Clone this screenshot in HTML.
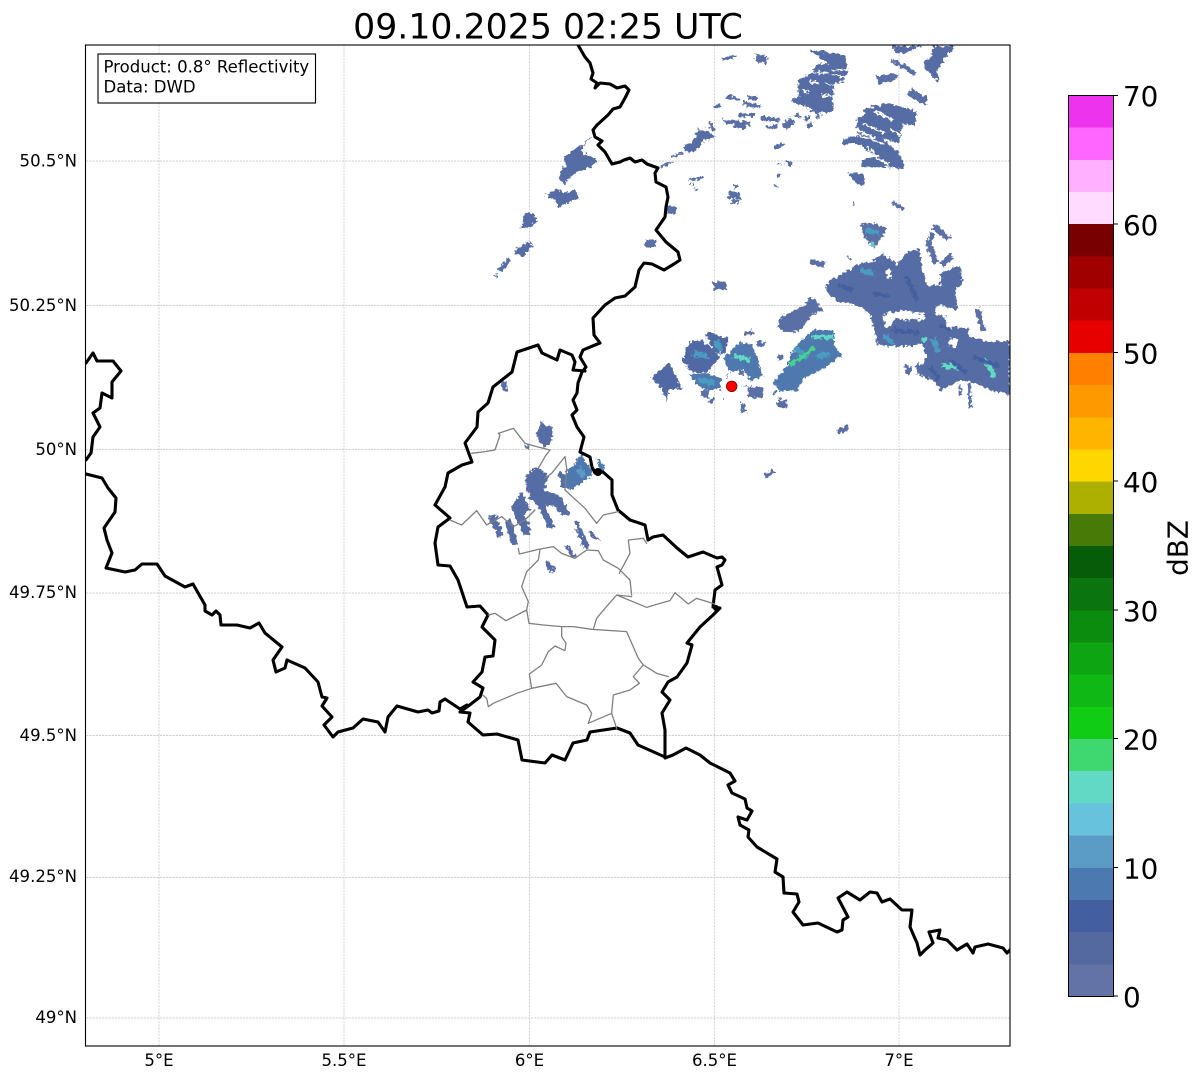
<!DOCTYPE html>
<html><head><meta charset="utf-8">
<style>
html,body{margin:0;padding:0;background:#fff;width:1202px;height:1081px;overflow:hidden}
svg{display:block}
text{font-family:"DejaVu Sans",sans-serif;fill:#000}
.g{stroke:#c2c2c2;stroke-width:.7;stroke-dasharray:2.2 1;fill:none}
.b{fill:none;stroke:#000;stroke-width:3.1;stroke-linejoin:round;stroke-linecap:round}
.c{fill:none;stroke:#808080;stroke-width:1.3;stroke-linejoin:round;stroke-linecap:round}
.r path{fill:none;stroke:#5a6fa6}
.r polygon{fill:#556ca5;stroke:none}
.r path.w{stroke:#fff}
.t{font-size:16.55px}
.k{font-size:27.8px}
</style></head><body>
<svg width="1202" height="1081" viewBox="0 0 1202 1081" xmlns="http://www.w3.org/2000/svg">
<defs>
<clipPath id="f"><rect x="85.5" y="45" width="924.5" height="1001"/></clipPath>
<filter id="j" filterUnits="userSpaceOnUse" x="85" y="45" width="925" height="1001" color-interpolation-filters="sRGB">
<feTurbulence type="fractalNoise" baseFrequency=".28" numOctaves="2" seed="4" result="n"/>
<feDisplacementMap in="SourceGraphic" in2="n" scale="7" xChannelSelector="R" yChannelSelector="G"/>
</filter>
</defs>
<rect width="1202" height="1081" fill="#fff"/>
<g class="g">
<path d="M159 45V1046M344 45V1046M529.5 45V1046M714.5 45V1046M899 45V1046"/>
<path d="M86 161H1010M86 305.5H1010M86 449.5H1010M86 593H1010M86 735.5H1010M86 877.5H1010M86 1018H1010"/>
</g>
<g clip-path="url(#f)"><g filter="url(#j)">
<g class="r" transform="translate(480,40) scale(.338,.3333)">
<polygon points="975,30 1080,45 1088,95 1075,125 1045,130 1045,212 1000,222 915,180 945,170 940,125 985,90 1020,60"/>
<path class="w" stroke-width="5" d="M990 65L1030 72M975 95L1030 100M1040 88L1095 92M1040 105L1090 112M950 150L975 155M1020 130L1060 135M930 195L975 205M975 125L1005 130M1010 165L1050 170"/>
<polygon points="1340,18 1405,18 1365,70 1350,95 1362,118 1355,125 1320,90 1310,65 1335,55"/>
<polygon points="1218,18 1310,18 1290,25 1250,42 1230,38"/>
<polygon points="1130,205 1215,190 1292,215 1290,262 1250,250 1240,310 1190,295 1250,350 1255,385 1125,380 1130,360 1175,350 1115,310 1070,315 1072,298 1115,290 1115,235 1140,225"/>
<path class="w" stroke-width="6" d="M1130 250L1200 280M1120 285L1190 310M1145 320L1170 345M1170 215L1220 240M1110 268L1170 295M1160 340L1220 385M1215 270L1260 292"/>
<polygon points="1090,400 1115,395 1140,410 1135,436 1110,430"/>
<polygon points="335,288 300,320 300,335 345,360 330,380 280,400 250,432 232,415 255,370 248,350"/>
<polygon points="195,465 225,445 250,460 285,445 290,475 235,502 220,480"/>
<polygon points="120,565 130,525 145,515 172,540 150,558"/>
<polygon points="100,635 150,600 155,620 125,652"/>
<polygon points="52,690 85,652 92,665 65,695"/>
<polygon points="648,268 668,268 695,292 660,300 655,322 618,340 598,322 630,305"/>
<path stroke-width="8" d="M715 58L760 48M565 350L600 340M535 380L565 365M905 365L922 375M617 420L660 412M715 198L690 202"/>
<path stroke-width="22" d="M815 55L848 60M1175 120L1232 110"/>
<path stroke-width="26" d="M1270 155L1320 185"/>
<path stroke-width="12" d="M1220 62L1288 100M1220 487L1255 510M730 170L770 178M790 172L820 175M780 190L830 200M720 245L800 250M750 258L785 260M680 245L690 270M935 222L945 232M995 228L1008 228M960 235L975 238M968 255L982 255M878 407L890 407M765 225L810 225M830 235L885 240M850 262L880 260M870 322L897 312"/>
<path stroke-width="24" d="M900 260L925 240"/>
<path stroke-width="24" d="M488 612L520 612M550 510L580 510M690 738L730 736M735 465L770 465"/>
<path stroke-width="12" d="M745 485L765 485M750 440L762 440"/>
<path stroke-width="6" d="M1105 490L1110 490M880 372L890 372M47 710L52 704M870 435L878 440M620 432L630 432M637 450L642 450"/>
</g>
<g class="r" transform="translate(640,210) scale(.3333)">
<polygon points="555,225 600,195 650,165 700,150 730,130 770,165 800,130 835,115 850,180 862,230 900,225 900,190 960,165 968,222 945,240 955,300 890,285 885,315 915,320 920,350 985,355 985,375 1010,385 1050,395 1110,390 1110,560 1090,548 1060,545 1010,520 960,510 905,540 880,515 830,490 860,440 845,405 770,410 715,405 705,365 690,310 650,285 600,275 565,255"/>
<polygon style="fill:#fff" points="728,318 748,306 800,302 855,312 855,330 800,331 765,326 748,350 738,352"/>
<polygon style="fill:#fff" points="924,390 948,384 956,400 944,412 926,406"/>
<polygon style="fill:#fff" points="738,182 750,180 754,202 742,205"/>
<polygon style="fill:#5a6fa6" points="660,45 700,40 740,55 730,75 700,118 670,75"/>
<polygon style="fill:#5a6fa6" points="412,350 425,318 490,288 515,258 552,305 515,314 482,362 440,370"/>
<polygon style="fill:#4f79ae" points="480,395 520,360 580,360 585,410 605,435 560,470 490,505 470,540 420,545 398,520 440,470 460,420"/>
<polygon style="fill:#5069a4" points="148,396 185,390 242,438 205,486 160,488 126,455"/>
<polygon style="fill:#4f79ae" points="145,495 195,488 244,505 238,533 205,543 170,525"/>
<polygon style="fill:#5069a4" points="34,505 85,458 102,490 128,538 85,538 80,575 62,532"/>
<polygon style="fill:#5069a4" points="195,372 212,368 266,385 256,432 226,428 208,398"/>
<polygon style="fill:#4f79ae" points="252,445 300,396 332,400 352,438 368,494 335,514 310,478 290,482 268,486"/>
<path stroke-width="16" d="M880 50L925 85M875 70L865 120M870 115L890 160M1012 295L1030 360M510 155L555 165M15 102L45 102M222 227L258 222M800 465L808 490M832 460L840 490M905 165L935 135"/>
<path stroke-width="4" d="M620 140L632 148"/>
<path stroke-width="24" d="M412 580L440 582"/>
<path stroke-width="14" d="M310 372L338 365M350 400L375 405M595 668L622 650M375 800L400 785M430 440L415 445M300 495L305 480"/>
<path stroke-width="32" d="M325 545L368 548"/>
<path stroke-width="22" d="M185 552L205 552"/>
<path stroke-width="8" d="M210 578L222 565M305 605L310 580M318 605L308 582M988 520L990 595M960 520L962 555M400 545L408 550"/>
<path stroke-width="3" d="M240 540L244 532M250 568L244 560M310 525L325 530M362 555L372 556M258 510L262 490"/>
<path style="stroke:#4a9bc2" stroke-width="16" d="M465 415L505 445M530 440L570 430M660 180L700 190M880 385L893 425M160 430L205 440M735 375L760 405M680 60L720 70M175 510L225 520M225 395L245 420"/>
<path style="stroke:#62d9c5" stroke-width="13" d="M520 380L580 380M905 465L960 475M1035 445L1065 505M280 435L330 450M690 100L705 108M845 385L860 395"/>
<path style="stroke:#44d48a" stroke-width="11" d="M450 465L525 412"/>
<path style="stroke:#445f9f" stroke-width="12" d="M590 225L640 240M700 250L750 260M800 200L830 270M900 345L930 360M1000 440L1080 470M760 360L840 370M870 470L900 510M930 450L980 490"/>
</g>
<g class="r" transform="translate(430,340) scale(.3333)">
<polygon points="215,125 230,120 230,155 218,155"/>
<polygon points="322,280 335,240 345,262 365,258 368,300 350,320 325,305"/>
<polygon points="283,310 298,318 298,330 285,325"/>
<polygon points="285,410 320,380 352,400 345,450 390,470 420,522 400,528 370,500 345,490 372,560 355,566 325,500 300,480 290,440"/>
<polygon points="245,500 275,455 302,510 285,520 302,580 285,586 260,545 250,510"/>
<polygon points="225,545 245,535 262,610 245,612 230,570"/>
<polygon points="175,530 195,522 222,585 205,592"/>
<polygon points="432,545 445,545 478,620 460,628"/>
<polygon points="472,575 485,575 510,600 495,602"/>
<polygon points="400,618 412,612 442,655 430,652"/>
<polygon points="344,668 355,662 378,690 362,698"/>
<polygon points="385,395 400,395 412,445 395,440"/>
<polygon style="fill:#4f79ae" points="405,400 425,380 455,345 490,400 470,420 420,452 400,432"/>
<polygon style="fill:#4f79ae" points="500,360 515,358 525,395 510,398"/>
<path style="stroke:#5a9cc5" stroke-width="18" d="M445 385L460 410"/>
</g>
</g></g>
<g clip-path="url(#f)">
<path class="b" d="M578 45L585 57 590 63 593 73 591 79 597 83 595 88 600 83 610 84 617 88 625 86 629 90 625 98 620 107 613 109 608 115 597 125 593 130 595 137 602 141 598 145 605 152 612 164 620 162 624 160 630 158 635 162 642 160 647 164 658 168 655 173 656 182 666 187 668 197 666 207 665 217 656 230 666 242 678 252 680 260 674 264 664 270 652 264 644 263 639 270 635 287 625 296 615 298 605 305 593 318 594 335 600 343 595 345 583 350 580 357 586 367 582 372 578 383 577 393 573 400 577 410 572 415 577 427 584 437 580 452 590 457 592 467 595 473 603 472 612 480 612 495 618 510 630 520 645 525 648 540 653 537 663 535 677 548 688 557 703 552 717 558 722 557 725 560 722 565 717 567 722 585 715 590 713 607 720 608 713 615 700 627 687 643 692 645 687 663 677 677 668 682 662 692 670 700 662 713 665 730 665 757"/>
<path class="b" d="M585 371L573 370 575 362 572 355 560 350 557 360 542 353 538 345 517 352 512 372 493 387 488 403 478 412 477 427 465 443 472 462 462 465 448 473 445 487 435 505 450 518 438 527 435 543 438 565 450 566 458 580 467 607 480 606 488 615 482 627 495 640 493 656 485 657 482 672 473 682 483 688 480 697 467 707 460 712 470 713 468 722 483 735 497 734 518 740 522 760 545 763 552 755 565 760 573 743 587 740 590 732 617 728 630 733 638 745 665 757"/>
<path class="b" d="M86 363L93 353 97 361 113 361 121 371 112 382 112 398 102 393 100 408 93 413 100 427 93 437 91 453 86 460"/>
<path class="b" d="M86 474L102 478 108 488 116 498 115 512 104 528 107 540 112 553 106 568 125 572 135 570 142 564 157 564 165 576 185 587 193 584 205 605 205 611 212 615 216 611 220 615 221 625 237 625 250 628 259 623 265 633 282 647 273 660 276 672 285 668 287 660 305 668 318 682 322 697 327 698 322 706 332 717 324 725 333 737 338 732 353 728 363 719 378 722 385 732 388 717 397 706 418 712 428 710 432 713 439 711 440 702 445 699 460 709 467 705"/>
<path class="b" d="M665 758L673 755 686 748 700 755 710 763 730 773 735 781 728 785 732 793 745 799 747 808 752 811 747 820 738 817 740 825 749 830 748 837 757 847 777 859 775 872 783 877 784 893 797 894 799 902 793 912 803 925 818 923 837 932 842 930 843 920 848 917 838 898 847 892 860 900 870 892 877 893 882 902 890 899 902 910 912 910 910 927 917 943 920 955 925 950 933 943 929 932 940 930 938 938 947 940 957 950 967 944 973 953 975 947 988 944 1003 948 1007 953 1012 948"/>
<circle cx="598" cy="472" r="4" fill="#000"/>
<circle cx="716" cy="608" r="3" fill="#000"/>
<g transform="translate(430,340) scale(.3333)">
<path class="c" vector-effect="non-scaling-stroke" d="M125 340L165 335 195 330 210 285 205 280 250 265 285 310 320 320 360 330 345 350 325 385M60 540L95 555 140 512 170 555 215 530 250 560 285 540 315 510M405 350L365 400 345 415M405 350L410 385 405 450 465 505 500 550 520 525 565 515"/>
</g>
<g transform="translate(430,530) scale(.3333)" fill="none">
<path class="c" vector-effect="non-scaling-stroke" d="M265 55L268 72 325 58 370 50 395 70 435 85 470 60 505 62 520 90 565 115 600 150 605 195M568 130L600 70 595 30 640 25 650 40M330 60L325 90 290 125 275 170 295 215 290 240 228 272 195 250 175 255M290 240L297 280 340 285 395 290 430 290 485 298 590 305 625 385 640 405 680 430 715 440M605 200L560 195 525 235 500 265 490 298M560 195L650 232 690 220 720 212 735 188 775 222 800 205 855 222M395 292L395 320 408 340 405 362 375 348 355 365 335 405 298 432 305 475 260 490 190 520 175 530 170 505 158 495M305 475L378 460 410 500 470 525 485 550 475 580 545 550 560 595M545 550L550 495 600 480 628 460 610 440 640 405"/>
</g>
</g>
<circle cx="731.7" cy="386.3" r="5.3" fill="#f00" stroke="#7a0000" stroke-width=".8"/>
<rect x="85.5" y="45" width="924.5" height="1001" fill="none" stroke="#000" stroke-width="1.1"/>
<rect x="98" y="54" width="217.5" height="49" fill="#fff" stroke="#000" stroke-width="1.1"/>
<text class="t" x="103.5" y="72.5">Product: 0.8° Reflectivity</text>
<text class="t" x="103.5" y="92.5">Data: DWD</text>
<text x="548" y="38.5" text-anchor="middle" font-size="34.72">09.10.2025 02:25 UTC</text>
<g class="t" text-anchor="end">
<text x="77" y="166.5">50.5°N</text>
<text x="77" y="311">50.25°N</text>
<text x="77" y="455">50°N</text>
<text x="77" y="598">49.75°N</text>
<text x="77" y="741">49.5°N</text>
<text x="77" y="882">49.25°N</text>
<text x="77" y="1023">49°N</text>
</g>
<g class="t" text-anchor="middle">
<text x="159" y="1066">5°E</text>
<text x="344" y="1066">5.5°E</text>
<text x="529.5" y="1066">6°E</text>
<text x="714.5" y="1066">6.5°E</text>
<text x="899" y="1066">7°E</text>
</g>
<g shape-rendering="crispEdges">
<rect x="1068" y="963.8" width="45" height="32.7" fill="#6373a5"/>
<rect x="1068" y="931.6" width="45" height="32.7" fill="#54699f"/>
<rect x="1068" y="899.4" width="45" height="32.7" fill="#445f9f"/>
<rect x="1068" y="867.3" width="45" height="32.7" fill="#4c7ab0"/>
<rect x="1068" y="835.1" width="45" height="32.7" fill="#5a9cc5"/>
<rect x="1068" y="802.9" width="45" height="32.7" fill="#66c2dd"/>
<rect x="1068" y="770.7" width="45" height="32.7" fill="#62d9c5"/>
<rect x="1068" y="738.5" width="45" height="32.7" fill="#3fd870"/>
<rect x="1068" y="706.4" width="45" height="32.7" fill="#10cc15"/>
<rect x="1068" y="674.2" width="45" height="32.7" fill="#0fb815"/>
<rect x="1068" y="642" width="45" height="32.7" fill="#0ea512"/>
<rect x="1068" y="609.8" width="45" height="32.7" fill="#0c8c0f"/>
<rect x="1068" y="577.6" width="45" height="32.7" fill="#0a750f"/>
<rect x="1068" y="545.5" width="45" height="32.7" fill="#065c09"/>
<rect x="1068" y="513.3" width="45" height="32.7" fill="#487a08"/>
<rect x="1068" y="481.1" width="45" height="32.7" fill="#adb000"/>
<rect x="1068" y="448.9" width="45" height="32.7" fill="#ffd700"/>
<rect x="1068" y="416.7" width="45" height="32.7" fill="#ffb400"/>
<rect x="1068" y="384.6" width="45" height="32.7" fill="#ff9900"/>
<rect x="1068" y="352.4" width="45" height="32.7" fill="#ff7f00"/>
<rect x="1068" y="320.2" width="45" height="32.7" fill="#e60000"/>
<rect x="1068" y="288" width="45" height="32.7" fill="#c00000"/>
<rect x="1068" y="255.8" width="45" height="32.7" fill="#a00000"/>
<rect x="1068" y="223.7" width="45" height="32.7" fill="#780000"/>
<rect x="1068" y="191.5" width="45" height="32.7" fill="#ffdcff"/>
<rect x="1068" y="159.3" width="45" height="32.7" fill="#ffb0ff"/>
<rect x="1068" y="127.1" width="45" height="32.7" fill="#ff66ff"/>
<rect x="1068" y="95" width="45" height="32.3" fill="#ee33ee"/>
</g>
<rect x="1068.5" y="95.5" width="45" height="901" fill="none" stroke="#000" stroke-width="1"/>
<path d="M1113 95.5h5M1113 224h5M1113 352.5h5M1113 481h5M1113 610h5M1113 738.5h5M1113 867.5h5M1113 996h5" stroke="#000" stroke-width="1" fill="none"/>
<g class="k">
<text x="1123" y="106">70</text>
<text x="1123" y="235">60</text>
<text x="1123" y="363.5">50</text>
<text x="1123" y="492">40</text>
<text x="1123" y="621">30</text>
<text x="1123" y="749.5">20</text>
<text x="1123" y="878.5">10</text>
<text x="1123" y="1007">0</text>
</g>
<text class="k" transform="translate(1187.5,548) rotate(-90)" text-anchor="middle">dBZ</text>
</svg>
</body></html>
